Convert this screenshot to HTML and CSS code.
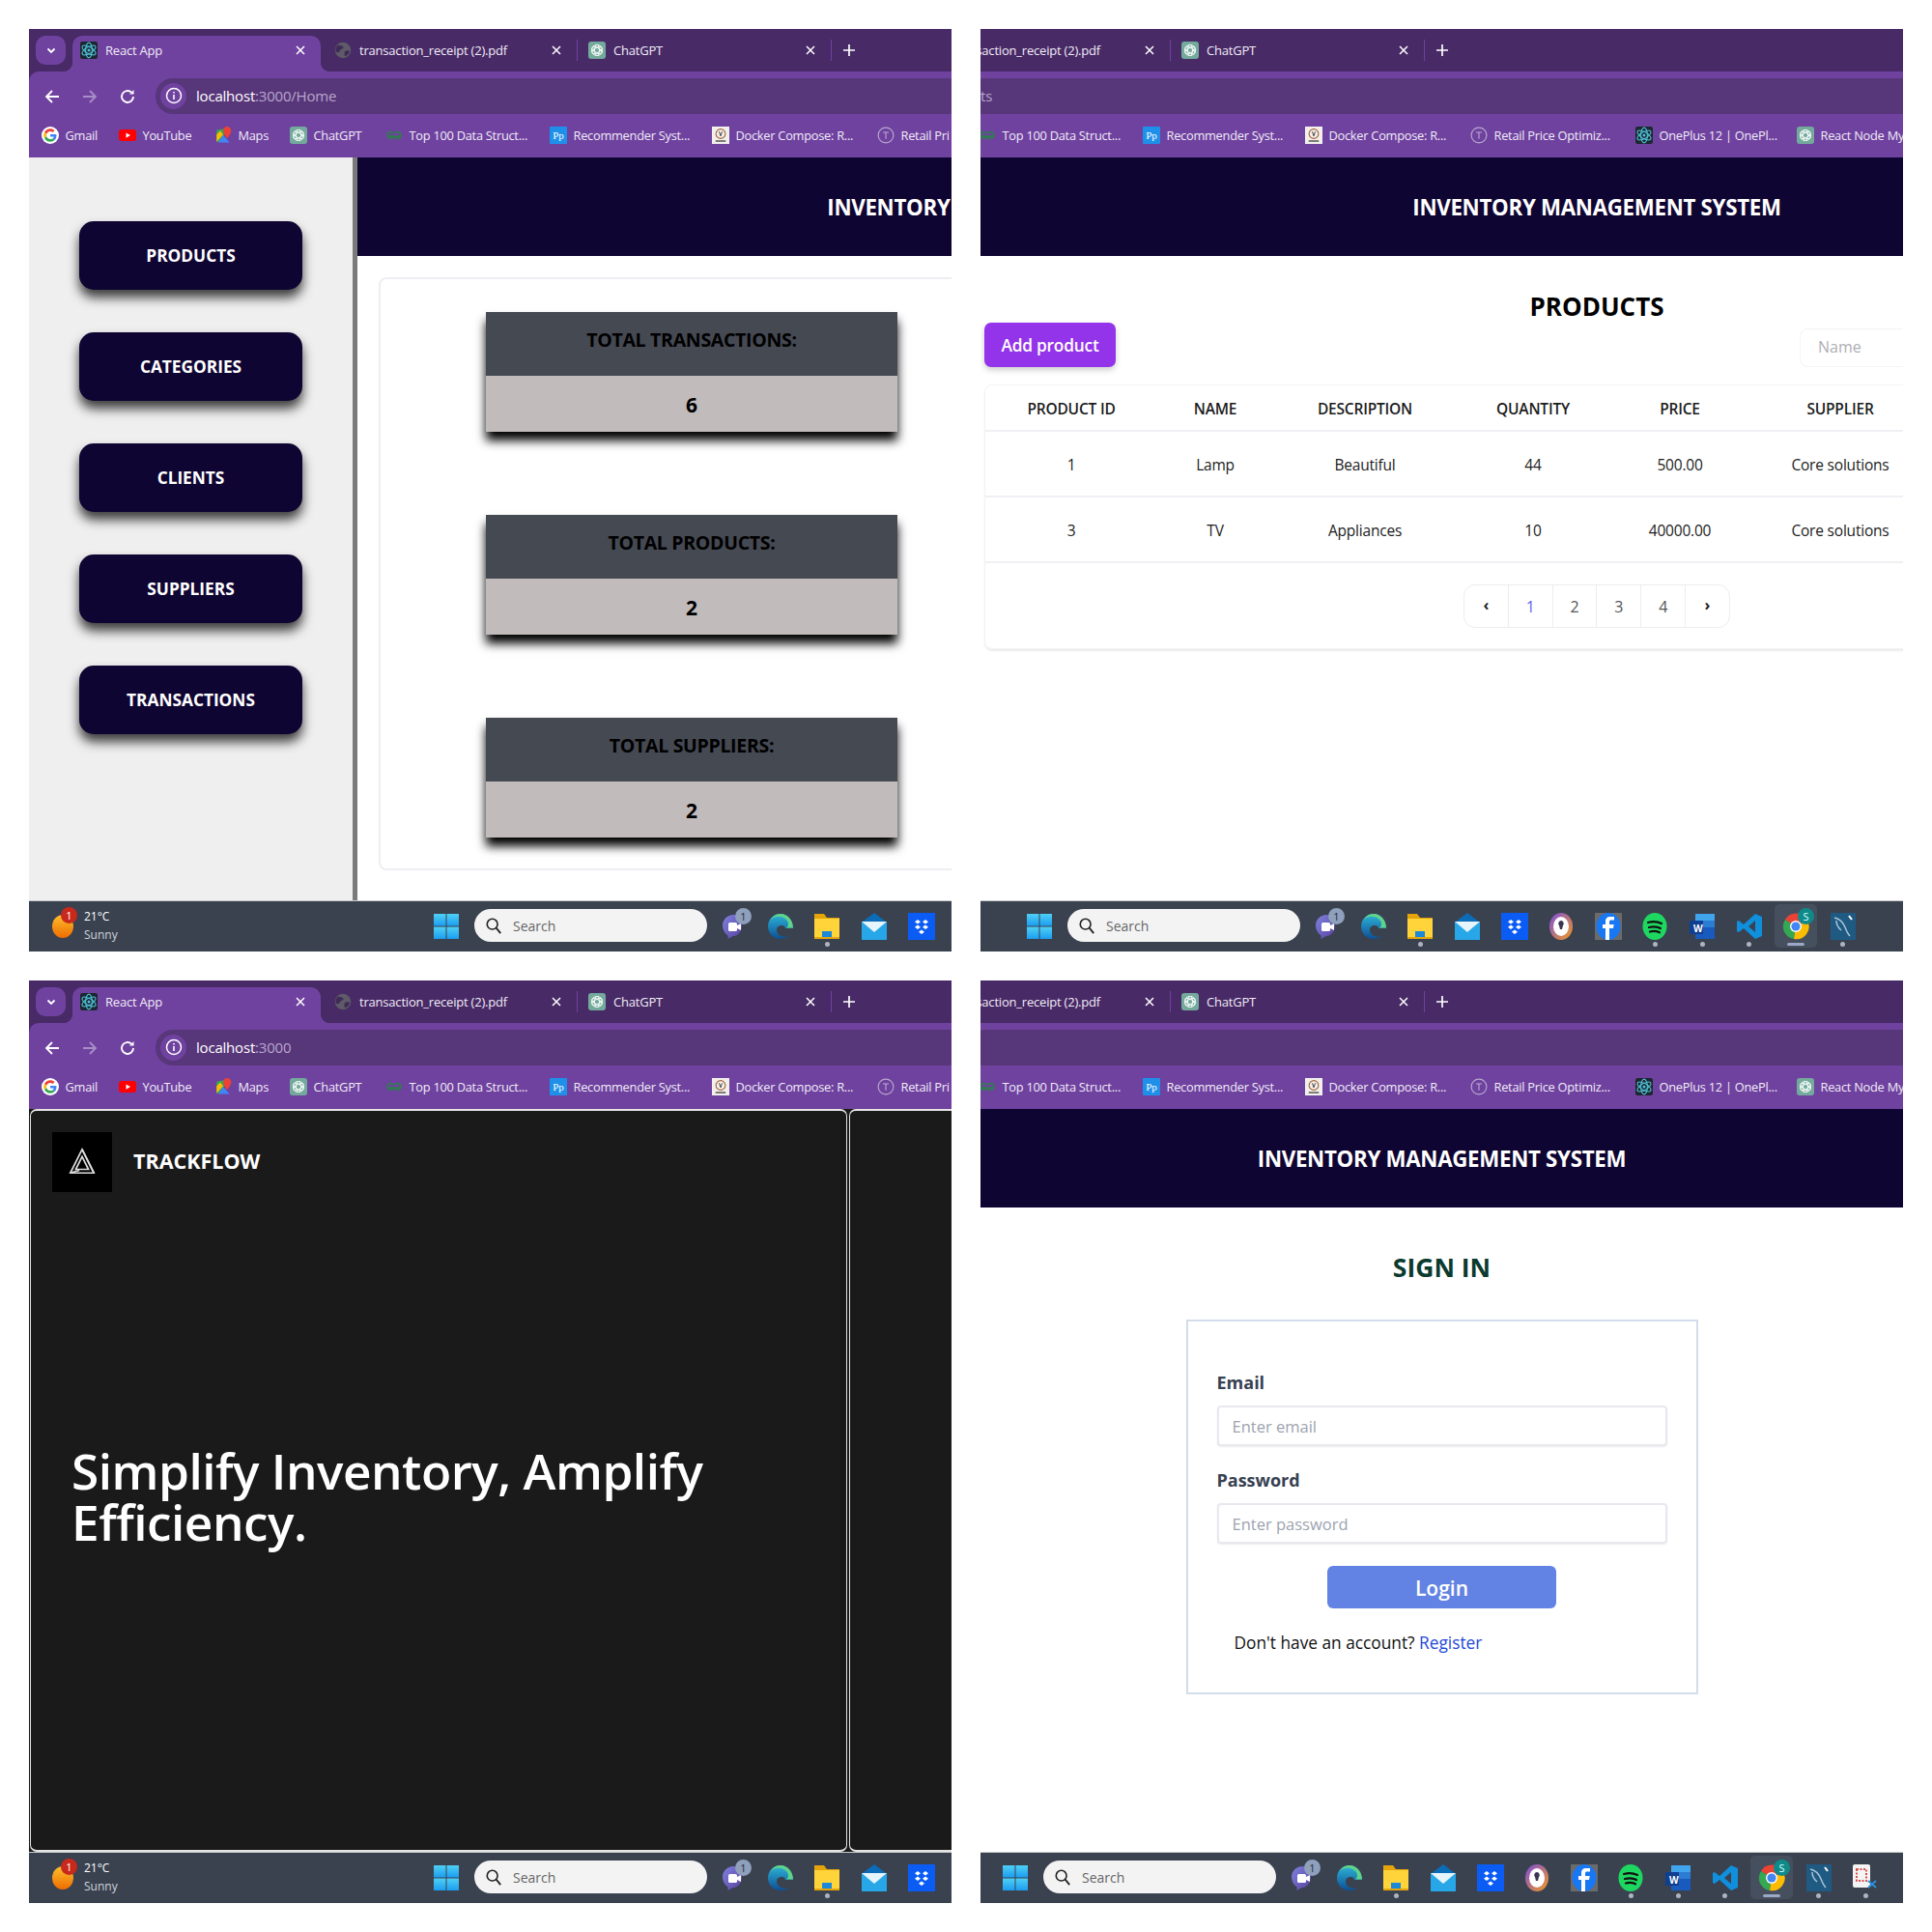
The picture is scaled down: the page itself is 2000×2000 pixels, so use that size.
FILE: index.html
```html
<!DOCTYPE html>
<html>
<head>
<meta charset="utf-8">
<title>Trackflow screens</title>
<link rel="stylesheet" href="styles.css">
</head>
<body>

<svg class="sprites" xmlns="http://www.w3.org/2000/svg">
  <defs>
    <linearGradient id="g-win" x1="0" y1="0" x2="0" y2="1"><stop offset="0" stop-color="#4fd0f5"/><stop offset="1" stop-color="#1b9df0"/></linearGradient>
    <linearGradient id="g-edge" x1="0" y1="0" x2="0" y2="1"><stop offset="0" stop-color="#2fb6d8"/><stop offset="1" stop-color="#0c4f96"/></linearGradient>
    <linearGradient id="g-teams" x1="0" y1="0" x2="1" y2="1"><stop offset="0" stop-color="#7f84e0"/><stop offset="1" stop-color="#5a3f9e"/></linearGradient>
    <linearGradient id="g-vault" x1="0" y1="0" x2="1" y2="1"><stop offset="0" stop-color="#7c4de0"/><stop offset="1" stop-color="#f39a1e"/></linearGradient>
  </defs>
  <symbol id="i-react" viewBox="0 0 24 24"><rect width="24" height="24" rx="3" fill="#1c2730"/><g fill="none" stroke="#4fc3d9" stroke-width="1.4"><ellipse cx="12" cy="12" rx="4.5" ry="10.5"/><ellipse cx="12" cy="12" rx="4.5" ry="10.5" transform="rotate(60 12 12)"/><ellipse cx="12" cy="12" rx="4.5" ry="10.5" transform="rotate(120 12 12)"/></g><circle cx="12" cy="12" r="2" fill="#4fc3d9"/></symbol>
  <symbol id="i-gpt" viewBox="0 0 24 24"><rect width="24" height="24" rx="4" fill="#74aa9c"/><g fill="none" stroke="#eef6f3" stroke-width="1.3"><circle cx="12" cy="12" r="7.5"/><ellipse cx="12" cy="12" rx="3.4" ry="7.5"/><ellipse cx="12" cy="12" rx="3.4" ry="7.5" transform="rotate(60 12 12)"/><ellipse cx="12" cy="12" rx="3.4" ry="7.5" transform="rotate(120 12 12)"/></g></symbol>
  <symbol id="i-globe" viewBox="0 0 24 24"><circle cx="12" cy="12" r="11" fill="#5e5a68"/><path d="M5 5c3 1 5 0 7 2s-1 3-3 4-1 4-4 4-3-2-3-4 1-4 3-6zM15 13c2-1 5-1 6 0s-2 6-5 7-2-6-1-7z" fill="#3f2a58"/></symbol>
  <symbol id="i-google" viewBox="-8 -8 64 64"><circle cx="24" cy="24" r="32" fill="#fff"/><path fill="#EA4335" d="M24 9.5c3.54 0 6.71 1.22 9.21 3.6l6.85-6.85C35.9 2.38 30.47 0 24 0 14.62 0 6.51 5.38 2.56 13.22l7.98 6.19C12.43 13.72 17.74 9.5 24 9.5z"/><path fill="#4285F4" d="M46.98 24.55c0-1.57-.15-3.09-.38-4.55H24v9.02h12.94c-.58 2.96-2.26 5.48-4.78 7.18l7.73 6c4.51-4.18 7.09-10.36 7.09-17.65z"/><path fill="#FBBC05" d="M10.53 28.59c-.48-1.45-.76-2.99-.76-4.59s.27-3.14.76-4.59l-7.98-6.19C.92 16.46 0 20.12 0 24c0 3.88.92 7.54 2.56 10.78l7.97-6.19z"/><path fill="#34A853" d="M24 48c6.48 0 11.93-2.13 15.89-5.81l-7.73-6c-2.15 1.45-4.92 2.3-8.16 2.3-6.26 0-11.57-4.22-13.47-9.91l-7.98 6.19C6.51 42.62 14.62 48 24 48z"/></symbol>
  <symbol id="i-yt" viewBox="0 0 24 24"><rect y="4" width="24" height="16" rx="4" fill="#f00"/><path d="M10 8.5l6 3.500-6 3.500z" fill="#fff"/></symbol>
  <symbol id="i-maps" viewBox="0 0 24 24"><path d="M3 5l10-2v18H3z" fill="#34a853"/><path d="M12 12l9 10H5z" fill="#4285f4"/><path d="M3 21l9-10-4-5-5 5z" fill="#fbbc04"/><path d="M17.500 0a5.500 5.500 0 0 1 5.500 5.500c0 4.500-5.500 10.500-5.500 10.500S12 10 12 5.500A5.500 5.500 0 0 1 17.500 0z" fill="#ea4335"/></symbol>
  <symbol id="i-gfg" viewBox="0 0 24 24"><g fill="none" stroke="#2f7d4f" stroke-width="2.200"><path d="M11 9.500a4.500 4.500 0 1 0 .5 4H3"/><path d="M13 9.500a4.500 4.500 0 1 1-.5 4H21"/></g></symbol>
  <symbol id="i-docker" viewBox="0 0 24 24"><rect width="24" height="24" fill="#f2f0ec"/><circle cx="12" cy="10" r="6.500" fill="none" stroke="#a8643a" stroke-width="1.500"/><path d="M10 7l2 6M14 7l-2 6" stroke="#333" stroke-width="1.200"/><rect x="5" y="19" width="14" height="2" fill="#555"/></symbol>
  <symbol id="i-retail" viewBox="0 0 24 24"><circle cx="12" cy="12" r="10.500" fill="none" stroke="#b9aace" stroke-width="1.500"/><path d="M8 8h8M12 8v9" stroke="#b9aace" stroke-width="1.500" fill="none"/></symbol>
  <symbol id="i-win" viewBox="0 0 26 26"><g fill="url(#g-win)"><rect width="12.500" height="12.500"/><rect x="13.500" width="12.500" height="12.500"/><rect y="13.500" width="12.500" height="12.500"/><rect x="13.500" y="13.500" width="12.500" height="12.500"/></g></symbol>
  <symbol id="i-teams" viewBox="0 0 28 28"><path d="M14 2c6 0 9 5 9 11s-4 11-9 11c-1 0-3 2-6 3 1-2 1-3 0-4-3-2-5-6-5-10C3 7 8 2 14 2z" fill="url(#g-teams)"/><rect x="9" y="10" width="9" height="9" rx="1.500" fill="#fff"/><path d="M18 13l4-2v7l-4-2z" fill="#fff"/></symbol>
  <symbol id="i-edge" viewBox="0 0 28 28"><path d="M14 1C6.500 1 1 7 1 14s5.500 13 13 13c3.500 0 6-1 8-2.500-6 1.500-12-1.500-12-7 0-3 2.500-4.500 5-4.500 3 0 4 1.500 4 3h8C27 8 21.500 1 14 1z" fill="url(#g-edge)"/><path d="M14 1c-4 0-8 2-10 6 3-3 8-4 12-2.500 4 1.500 6 4 6 7 0 2-1 4-3 4h8C27 8 21.500 1 14 1z" fill="#5fd38a"/></symbol>
  <symbol id="i-folder" viewBox="0 0 28 28"><path d="M1 1h10l3 4h13v4H1z" fill="#e5a50a"/><rect x="1" y="6" width="26" height="21" fill="#ffd43b"/><rect x="1" y="25" width="26" height="2" fill="#e5a50a"/><rect x="9" y="19" width="10" height="6" fill="#1b88d8"/></symbol>
  <symbol id="i-mail" viewBox="0 0 28 28"><path d="M14 0l12 9H2z" fill="#0b6cb8"/><rect x="1" y="9" width="26" height="19" fill="#27a6e8"/><path d="M1 9h26l-13 11z" fill="#e6f4fb"/></symbol>
  <symbol id="i-dropbox" viewBox="0 0 28 28"><rect width="28" height="28" fill="#0b5cf5"/><g fill="#fff"><path d="M10 7l3 2.200-3 2.200-3-2.200zM18 7l3 2.200-3 2.200-3-2.200zM10 12.500l3 2.200-3 2.200-3-2.200zM18 12.500l3 2.200-3 2.200-3-2.200zM14 17.500l3 2.200-3 2.200-3-2.200z"/></g></symbol>
  <symbol id="i-vault" viewBox="0 0 28 28"><ellipse cx="14" cy="14" rx="12" ry="14" fill="url(#g-vault)"/><ellipse cx="14" cy="14" rx="8" ry="10" fill="#fff"/><path d="M14 8a3 3 0 0 1 2 5l-1 4h-2l-1-4a3 3 0 0 1 2-5z" fill="#3a3550"/></symbol>
  <symbol id="i-fb" viewBox="0 0 28 28"><rect width="28" height="28" fill="#6b6b6b"/><ellipse cx="14" cy="14" rx="12.500" ry="14" fill="#1877f2"/><path d="M15 28V16h4l.7-4H15V9.500c0-1.400.6-2 2-2h3V4h-4c-3.500 0-5 2-5 5v3H8v4h3v12z" fill="#fff"/></symbol>
  <symbol id="i-spotify" viewBox="0 0 28 28"><ellipse cx="14" cy="14" rx="12.500" ry="14" fill="#1ed760"/><g fill="none" stroke="#111" stroke-width="2.200" stroke-linecap="round"><path d="M7 10c5-1.500 10-1 14 1"/><path d="M8 15c4-1 9-.8 12 1"/><path d="M9 19.500c3-.8 7-.6 10 .8"/></g></symbol>
  <symbol id="i-word" viewBox="0 0 28 28"><rect x="7" y="1" width="20" height="26" fill="#185abd"/><rect x="7" y="1" width="20" height="7" fill="#41a5ee"/><rect x="7" y="8" width="20" height="7" fill="#2b7cd3"/><rect x="1" y="8" width="14" height="14" fill="#103f91"/></symbol>
  <symbol id="i-code" viewBox="0 0 28 28"><path d="M20 1l7 3v20l-7 3-12-11-5 4-2-1V9l2-1 5 4zM20 8l-7 6 7 6z" fill="#0f8fdc"/></symbol>
  <symbol id="i-chrome" viewBox="0 0 28 28"><path d="M14 14L3 7A13 13 0 0 1 26 8z" fill="#ea4335"/><path d="M14 14L3 7a13 13 0 0 0 9 20z" fill="#34a853"/><path d="M14 14l12-6a13 13 0 0 1-14 19z" fill="#fbbc04"/><circle cx="14" cy="14" r="6" fill="#fff"/><circle cx="14" cy="14" r="4.600" fill="#4285f4"/></symbol>
  <symbol id="i-mysql" viewBox="0 0 28 28"><rect x="1" width="26" height="28" fill="#1e5a82"/><path d="M5 5c5 1 9 5 11 10s3 7 5 9M7 8c0 6 3 8 5 10" fill="none" stroke="#a9c4d6" stroke-width="1.500"/><path d="M20 3l3 4" stroke="#fff" stroke-width="2"/></symbol>
  <symbol id="i-snip" viewBox="0 0 28 28"><rect x="1" width="18" height="24" rx="2" fill="#f4f4f4"/><rect x="5" y="5" width="10" height="12" fill="none" stroke="#d9534f" stroke-width="2" stroke-dasharray="2 1.500"/><path d="M17 17l8 7M25 17l-8 7" stroke="#2a8fd8" stroke-width="2"/></symbol>
  <symbol id="i-search" viewBox="0 0 20 20"><circle cx="8.500" cy="8.500" r="6" fill="none" stroke="#222" stroke-width="1.800"/><path d="M13 13l5 6" stroke="#222" stroke-width="2"/></symbol>
  <symbol id="i-close" viewBox="0 0 10 10"><path d="M1 1l8 8M9 1L1 9" stroke="#fff" stroke-width="1.500"/></symbol>
  <symbol id="i-chev" viewBox="0 0 12 12"><path d="M2.500 4.500L6 8l3.500-3.500" fill="none" stroke="#fff" stroke-width="1.800"/></symbol>
  <symbol id="i-plus" viewBox="0 0 14 14"><path d="M7 1v12M1 7h12" stroke="#fff" stroke-width="1.700"/></symbol>
  <symbol id="i-back" viewBox="0 0 18 18"><path d="M16 9H3M9 3L3 9l6 6" fill="none" stroke="currentColor" stroke-width="1.800"/></symbol>
  <symbol id="i-fwd" viewBox="0 0 18 18"><path d="M2 9h13M9 3l6 6-6 6" fill="none" stroke="currentColor" stroke-width="1.800"/></symbol>
  <symbol id="i-reload" viewBox="0 0 18 18"><path d="M15 9a6 6 0 1 1-2-4.500" fill="none" stroke="currentColor" stroke-width="1.900"/><path d="M15.500 2v4.500H11z" fill="currentColor"/></symbol>
  <symbol id="i-info" viewBox="0 0 18 18"><circle cx="9" cy="9" r="7.500" fill="none" stroke="#fff" stroke-width="1.500"/><path d="M9 8v5M9 5v1.600" stroke="#fff" stroke-width="1.600"/></symbol>
  <symbol id="i-logo" viewBox="0 0 32 32"><g fill="none" stroke="#ddd" stroke-width="1.800"><path d="M16 2L3 28h26z"/><path d="M16 10L9 24h14z"/><path d="M3 28l10-3M29 28L16 2"/></g></symbol>
</svg>

<div class="sheet">

  <!-- dashboard -->
  <section class="window">
    <div class="tabstrip">
      <div class="tab-row">
        <span class="tab-list"><svg class="ico-s"><use href="#i-chev"/></svg></span>
        <div class="tab active"><svg class="fav"><use href="#i-react"/></svg><span class="tab-title">React App</span><svg class="tab-x"><use href="#i-close"/></svg></div>
        <div class="tab"><svg class="fav"><use href="#i-globe"/></svg><span class="tab-title">transaction_receipt (2).pdf</span><svg class="tab-x"><use href="#i-close"/></svg></div>
        <div class="tab last"><svg class="fav"><use href="#i-gpt"/></svg><span class="tab-title">ChatGPT</span><svg class="tab-x"><use href="#i-close"/></svg></div>
        <svg class="tab-plus"><use href="#i-plus"/></svg>
      </div>
    </div>
    <div class="toolbar">
      <svg class="nav"><use href="#i-back"/></svg>
      <svg class="nav off"><use href="#i-fwd"/></svg>
      <svg class="nav"><use href="#i-reload"/></svg>
      <div class="address"><span class="site-info"><svg class="ico-i"><use href="#i-info"/></svg></span><span class="url">localhost<span class="url-rest">:3000/Home</span></span></div>
    </div>
    <div class="bookmarks">
      <div class="marks">
        <span class="mark"><svg class="fav"><use href="#i-google"/></svg>Gmail</span>
        <span class="mark"><svg class="fav"><use href="#i-yt"/></svg>YouTube</span>
        <span class="mark"><svg class="fav"><use href="#i-maps"/></svg>Maps</span>
        <span class="mark"><svg class="fav"><use href="#i-gpt"/></svg>ChatGPT</span>
        <span class="mark"><svg class="fav"><use href="#i-gfg"/></svg>Top 100 Data Struct...</span>
        <span class="mark"><span class="pp">Pp</span>Recommender Syst...</span>
        <span class="mark"><svg class="fav"><use href="#i-docker"/></svg>Docker Compose: R...</span>
        <span class="mark"><svg class="fav"><use href="#i-retail"/></svg>Retail Pri</span>
      </div>
    </div>
    <main class="viewport">
      <aside class="sidebar">
        <a class="side-btn">PRODUCTS</a>
        <a class="side-btn">CATEGORIES</a>
        <a class="side-btn">CLIENTS</a>
        <a class="side-btn">SUPPLIERS</a>
        <a class="side-btn">TRANSACTIONS</a>
      </aside>
      <div class="dash">
        <header class="app-head">INVENTORY MANAGEMENT SYSTEM</header>
        <div class="stat-box">
          <div class="stat"><div class="stat-name">TOTAL TRANSACTIONS:</div><div class="stat-num">6</div></div>
          <div class="stat"><div class="stat-name">TOTAL PRODUCTS:</div><div class="stat-num">2</div></div>
          <div class="stat"><div class="stat-name">TOTAL SUPPLIERS:</div><div class="stat-num">2</div></div>
        </div>
      </div>
    </main>
    <footer class="taskbar">
      <div class="weather"><span class="sun"><span class="sun-badge">1</span></span><span class="weather-text"><span>21°C</span><span class="weather-sub">Sunny</span></span></div>
      <svg class="start"><use href="#i-win"/></svg>
      <div class="search"><svg class="search-ico"><use href="#i-search"/></svg>Search</div>
      <span class="cell"><svg class="app"><use href="#i-teams"/></svg><span class="count">1</span></span>
      <span class="cell"><svg class="app"><use href="#i-edge"/></svg></span>
      <span class="cell on"><svg class="app"><use href="#i-folder"/></svg></span>
      <span class="cell"><svg class="app"><use href="#i-mail"/></svg></span>
      <span class="cell"><svg class="app"><use href="#i-dropbox"/></svg></span>
    </footer>
  </section>

  <!-- products -->
  <section class="window shifted">
    <div class="tabstrip">
      <div class="tab-row">
        <div class="tab"><svg class="fav"><use href="#i-globe"/></svg><span class="tab-title">transaction_receipt (2).pdf</span><svg class="tab-x"><use href="#i-close"/></svg></div>
        <div class="tab last"><svg class="fav"><use href="#i-gpt"/></svg><span class="tab-title">ChatGPT</span><svg class="tab-x"><use href="#i-close"/></svg></div>
        <svg class="tab-plus"><use href="#i-plus"/></svg>
      </div>
    </div>
    <div class="toolbar">
      <div class="address flush"><span class="url-rest">ts</span></div>
    </div>
    <div class="bookmarks">
      <div class="marks">
        <span class="mark"><svg class="fav"><use href="#i-gfg"/></svg>Top 100 Data Struct...</span>
        <span class="mark"><span class="pp">Pp</span>Recommender Syst...</span>
        <span class="mark"><svg class="fav"><use href="#i-docker"/></svg>Docker Compose: R...</span>
        <span class="mark"><svg class="fav"><use href="#i-retail"/></svg>Retail Price Optimiz...</span>
        <span class="mark"><svg class="fav"><use href="#i-react"/></svg>OnePlus 12 | OnePl...</span>
        <span class="mark"><svg class="fav"><use href="#i-gpt"/></svg>React Node My</span>
      </div>
    </div>
    <main class="viewport">
      <div class="products">
        <header class="app-head">INVENTORY MANAGEMENT SYSTEM</header>
        <h2 class="page-title">PRODUCTS</h2>
        <div class="actions">
          <button class="add-btn">Add product</button>
          <div class="name-filter">Name</div>
        </div>
        <div class="table-card">
          <table class="grid">
            <colgroup><col class="c-id"><col class="c-name"><col class="c-desc"><col class="c-qty"><col class="c-price"><col class="c-sup"><col></colgroup>
            <thead><tr><th>PRODUCT ID</th><th>NAME</th><th>DESCRIPTION</th><th>QUANTITY</th><th>PRICE</th><th>SUPPLIER</th><th></th></tr></thead>
            <tbody>
              <tr><td>1</td><td>Lamp</td><td>Beautiful</td><td>44</td><td>500.00</td><td>Core solutions</td><td></td></tr>
              <tr><td>3</td><td>TV</td><td>Appliances</td><td>10</td><td>40000.00</td><td>Core solutions</td><td></td></tr>
            </tbody>
          </table>
          <div class="pager"><span class="pg arrow">‹</span><span class="pg cur">1</span><span class="pg">2</span><span class="pg">3</span><span class="pg">4</span><span class="pg arrow">›</span></div>
        </div>
      </div>
    </main>
    <footer class="taskbar tb-a">
      <svg class="start"><use href="#i-win"/></svg>
      <div class="search"><svg class="search-ico"><use href="#i-search"/></svg>Search</div>
      <span class="cell"><svg class="app"><use href="#i-teams"/></svg><span class="count">1</span></span>
      <span class="cell"><svg class="app"><use href="#i-edge"/></svg></span>
      <span class="cell on"><svg class="app"><use href="#i-folder"/></svg></span>
      <span class="cell"><svg class="app"><use href="#i-mail"/></svg></span>
      <span class="cell"><svg class="app"><use href="#i-dropbox"/></svg></span>
      <span class="cell"><svg class="app"><use href="#i-vault"/></svg></span>
      <span class="cell"><svg class="app"><use href="#i-fb"/></svg></span>
      <span class="cell on"><svg class="app"><use href="#i-spotify"/></svg></span>
      <span class="cell on"><svg class="app"><use href="#i-word"/></svg><span class="word-w">W</span></span>
      <span class="cell on"><svg class="app"><use href="#i-code"/></svg></span>
      <span class="cell cell-active"><svg class="app"><use href="#i-chrome"/></svg><span class="count teal">S</span></span>
      <span class="cell on"><svg class="app"><use href="#i-mysql"/></svg></span>
    </footer>
  </section>

  <!-- landing -->
  <section class="window">
    <div class="tabstrip">
      <div class="tab-row">
        <span class="tab-list"><svg class="ico-s"><use href="#i-chev"/></svg></span>
        <div class="tab active"><svg class="fav"><use href="#i-react"/></svg><span class="tab-title">React App</span><svg class="tab-x"><use href="#i-close"/></svg></div>
        <div class="tab"><svg class="fav"><use href="#i-globe"/></svg><span class="tab-title">transaction_receipt (2).pdf</span><svg class="tab-x"><use href="#i-close"/></svg></div>
        <div class="tab last"><svg class="fav"><use href="#i-gpt"/></svg><span class="tab-title">ChatGPT</span><svg class="tab-x"><use href="#i-close"/></svg></div>
        <svg class="tab-plus"><use href="#i-plus"/></svg>
      </div>
    </div>
    <div class="toolbar">
      <svg class="nav"><use href="#i-back"/></svg>
      <svg class="nav off"><use href="#i-fwd"/></svg>
      <svg class="nav"><use href="#i-reload"/></svg>
      <div class="address"><span class="site-info"><svg class="ico-i"><use href="#i-info"/></svg></span><span class="url">localhost<span class="url-rest">:3000</span></span></div>
    </div>
    <div class="bookmarks">
      <div class="marks">
        <span class="mark"><svg class="fav"><use href="#i-google"/></svg>Gmail</span>
        <span class="mark"><svg class="fav"><use href="#i-yt"/></svg>YouTube</span>
        <span class="mark"><svg class="fav"><use href="#i-maps"/></svg>Maps</span>
        <span class="mark"><svg class="fav"><use href="#i-gpt"/></svg>ChatGPT</span>
        <span class="mark"><svg class="fav"><use href="#i-gfg"/></svg>Top 100 Data Struct...</span>
        <span class="mark"><span class="pp">Pp</span>Recommender Syst...</span>
        <span class="mark"><svg class="fav"><use href="#i-docker"/></svg>Docker Compose: R...</span>
        <span class="mark"><svg class="fav"><use href="#i-retail"/></svg>Retail Pri</span>
      </div>
    </div>
    <main class="viewport landing">
      <div class="hero">
        <div class="brand"><span class="brand-mark"><svg class="brand-ico"><use href="#i-logo"/></svg></span><span class="brand-name">TRACKFLOW</span></div>
        <h1 class="headline">Simplify Inventory, Amplify Efficiency.</h1>
      </div>
      <div class="hero-side"></div>
    </main>
    <footer class="taskbar">
      <div class="weather"><span class="sun"><span class="sun-badge">1</span></span><span class="weather-text"><span>21°C</span><span class="weather-sub">Sunny</span></span></div>
      <svg class="start"><use href="#i-win"/></svg>
      <div class="search"><svg class="search-ico"><use href="#i-search"/></svg>Search</div>
      <span class="cell"><svg class="app"><use href="#i-teams"/></svg><span class="count">1</span></span>
      <span class="cell"><svg class="app"><use href="#i-edge"/></svg></span>
      <span class="cell on"><svg class="app"><use href="#i-folder"/></svg></span>
      <span class="cell"><svg class="app"><use href="#i-mail"/></svg></span>
      <span class="cell"><svg class="app"><use href="#i-dropbox"/></svg></span>
    </footer>
  </section>

  <!-- sign in -->
  <section class="window shifted">
    <div class="tabstrip">
      <div class="tab-row">
        <div class="tab"><svg class="fav"><use href="#i-globe"/></svg><span class="tab-title">transaction_receipt (2).pdf</span><svg class="tab-x"><use href="#i-close"/></svg></div>
        <div class="tab last"><svg class="fav"><use href="#i-gpt"/></svg><span class="tab-title">ChatGPT</span><svg class="tab-x"><use href="#i-close"/></svg></div>
        <svg class="tab-plus"><use href="#i-plus"/></svg>
      </div>
    </div>
    <div class="toolbar">
      <div class="address flush"></div>
    </div>
    <div class="bookmarks">
      <div class="marks">
        <span class="mark"><svg class="fav"><use href="#i-gfg"/></svg>Top 100 Data Struct...</span>
        <span class="mark"><span class="pp">Pp</span>Recommender Syst...</span>
        <span class="mark"><svg class="fav"><use href="#i-docker"/></svg>Docker Compose: R...</span>
        <span class="mark"><svg class="fav"><use href="#i-retail"/></svg>Retail Price Optimiz...</span>
        <span class="mark"><svg class="fav"><use href="#i-react"/></svg>OnePlus 12 | OnePl...</span>
        <span class="mark"><svg class="fav"><use href="#i-gpt"/></svg>React Node My</span>
      </div>
    </div>
    <main class="viewport">
      <div class="login">
        <header class="app-head">INVENTORY MANAGEMENT SYSTEM</header>
        <h2 class="login-title">SIGN IN</h2>
        <form class="login-box">
          <label class="field-label">Email</label>
          <input class="field" type="text" placeholder="Enter email">
          <label class="field-label second">Password</label>
          <input class="field" type="text" placeholder="Enter password">
          <button class="login-btn" type="button">Login</button>
          <p class="register">Don't have an account? <a class="register-link">Register</a></p>
        </form>
      </div>
    </main>
    <footer class="taskbar tb-b">
      <svg class="start"><use href="#i-win"/></svg>
      <div class="search"><svg class="search-ico"><use href="#i-search"/></svg>Search</div>
      <span class="cell"><svg class="app"><use href="#i-teams"/></svg><span class="count">1</span></span>
      <span class="cell"><svg class="app"><use href="#i-edge"/></svg></span>
      <span class="cell on"><svg class="app"><use href="#i-folder"/></svg></span>
      <span class="cell"><svg class="app"><use href="#i-mail"/></svg></span>
      <span class="cell"><svg class="app"><use href="#i-dropbox"/></svg></span>
      <span class="cell"><svg class="app"><use href="#i-vault"/></svg></span>
      <span class="cell"><svg class="app"><use href="#i-fb"/></svg></span>
      <span class="cell on"><svg class="app"><use href="#i-spotify"/></svg></span>
      <span class="cell on"><svg class="app"><use href="#i-word"/></svg><span class="word-w">W</span></span>
      <span class="cell on"><svg class="app"><use href="#i-code"/></svg></span>
      <span class="cell cell-active"><svg class="app"><use href="#i-chrome"/></svg><span class="count teal">S</span></span>
      <span class="cell on"><svg class="app"><use href="#i-mysql"/></svg></span>
      <span class="cell on"><svg class="app"><use href="#i-snip"/></svg></span>
    </footer>
  </section>

</div>
</body>
</html>
```

FILE: styles.css
```css
* {
   box-sizing: border-box;
}

body {
   margin: 0;
   background-color: white;
   font-family: "Open Sans", "Noto Sans", sans-serif;
}

.sprites {
   position: absolute;
   width: 0;
   height: 0;
}

.sheet {
   display: grid;
   grid-template-columns: 955px 955px;
   grid-template-rows: 955px 955px;
   gap: 30px;
   padding: 30px;
}

.window {
   display: flex;
   flex-direction: column;
   overflow: hidden;
   background-color: #482a66;
}

/* browser chrome */

.tabstrip {
   flex: none;
   height: 44px;
   overflow: hidden;
}

.tab-row {
   display: flex;
   align-items: flex-start;
   width: 1300px;
   padding: 7px 0 0 7px;
}

/* the right hand shots start part way along the strip */
.shifted .tab-row {
   margin-left: -63px;
   padding-left: 0;
}

.tab-list {
   display: flex;
   align-items: center;
   justify-content: center;
   width: 31px;
   height: 30px;
   margin-right: 7px;
   border-radius: 10px;
   background-color: #6f42a0;
}

.ico-s {
   width: 12px;
   height: 12px;
}

.tab {
   display: flex;
   align-items: center;
   gap: 8px;
   width: 259px;
   height: 30px;
   padding: 0 16px 0 8px;
   margin-right: 4px;
   font-size: 13px;
   letter-spacing: -0.2px;
   color: #f1ecf6;
   position: relative;
}

.tab::after {
   content: "";
   position: absolute;
   right: -1px;
   top: 4px;
   width: 1px;
   height: 22px;
   background-color: #6f42a0;
}

.tab.active {
   width: 257px;
   height: 37px;
   margin-right: 6px;
   padding-bottom: 7px;
   border-radius: 10px 10px 0 0;
   background-color: #6f42a0;
}

.tab.active::before, .tab.active::after {
   content: "";
   position: absolute;
   top: auto;
   bottom: 0;
   width: 10px;
   height: 10px;
}

.tab.active::before {
   right: -10px;
   background: radial-gradient(circle at 100% 0, transparent 10px, #6f42a0 10.5px);
}

.tab.active::after {
   right: auto;
   left: -10px;
   background: radial-gradient(circle at 0 0, transparent 10px, #6f42a0 10.5px);
}

.tab.last {
   margin-right: 0;
}

.tab-title {
   flex: 1;
   white-space: nowrap;
}

.fav {
   flex: none;
   width: 18px;
   height: 18px;
}

.pp {
   flex: none;
   width: 18px;
   height: 18px;
   border-radius: 1px;
   background-color: #1e90ea;
   color: white;
   font-family: "Liberation Serif", serif;
   font-size: 11px;
   line-height: 18px;
   letter-spacing: 0;
   text-align: center;
}

.tab-x {
   flex: none;
   width: 10px;
   height: 10px;
}

.tab-plus {
   flex: none;
   width: 14px;
   height: 14px;
   margin: 8px 0 0 12px;
}

.toolbar {
   flex: none;
   display: flex;
   align-items: center;
   height: 44px;
   padding-top: 7px;
   overflow: hidden;
   background-color: #6f42a0;
   border-top-left-radius: 10px;
}

.shifted .toolbar {
   border-top-left-radius: 0;
}

.nav {
   flex: none;
   width: 18px;
   height: 18px;
   margin-left: 15px;
   margin-right: 6px;
   color: #fff;
}

.nav.off {
   color: #a78fc6;
}

.address {
   flex: 1;
   display: flex;
   align-items: center;
   gap: 10px;
   height: 37px;
   margin-left: 14px;
   padding-left: 5px;
   padding-bottom: 1px;
   border-radius: 18px 0 0 18px;
   background-color: #58367a;
   font-size: 15px;
   letter-spacing: -0.2px;
   color: #fff;
}

.address.flush {
   margin-left: 0;
   padding-left: 0;
   border-radius: 0;
}

.site-info {
   display: flex;
   align-items: center;
   justify-content: center;
   width: 27px;
   height: 27px;
   border-radius: 50%;
   background-color: #6f42a0;
}

.ico-i {
   width: 18px;
   height: 18px;
}

.url-rest {
   color: #b7a6cd;
}

.bookmarks {
   flex: none;
   height: 45px;
   overflow: hidden;
   background-color: #6f42a0;
}

.marks {
   display: grid;
   grid-template-columns: 80px 99px 78px 99px 170px 168px 171px 100px;
   height: 100%;
   padding-left: 13px;
   padding-bottom: 1px;
   align-items: center;
}

.shifted .marks {
   grid-template-columns: 170px 168px 171px 171px 167px 100px;
   width: 960px;
   margin-left: -2px;
   padding-left: 0;
}

.mark {
   display: flex;
   align-items: center;
   gap: 6.5px;
   font-size: 12.8px;
   letter-spacing: -0.25px;
   color: #f1ecf6;
   white-space: nowrap;
}

.viewport {
   flex: 1;
   display: flex;
   min-height: 0;
   overflow: hidden;
   background-color: white;
}

/* header shared by the app pages */

.app-head {
   height: 102px;
   padding-top: 1px;
   display: flex;
   align-items: center;
   justify-content: center;
   background-color: #0f0532;
   color: white;
   font-size: 22.3px;
   font-weight: 700;
   letter-spacing: -0.3px;
}

/* dashboard */

.sidebar {
   flex: none;
   display: flex;
   flex-direction: column;
   gap: 44px;
   width: 340px;
   padding: 66px 0 0 52px;
   background-color: #efefef;
   border-right: 5px solid #7a7a7a;
}

.side-btn {
   display: flex;
   align-items: center;
   justify-content: center;
   width: 231px;
   height: 71px;
   border-radius: 15px;
   background-color: #0f0532;
   color: white;
   font-size: 17.3px;
   font-weight: 700;
   box-shadow: 0 8px 12px rgba(0, 0, 0, 0.75);
}

.dash {
   flex: none;
   width: 1354px;
}

.stat-box {
   display: flex;
   flex-direction: column;
   gap: 86px;
   height: 614px;
   margin: 22px 0 0 22px;
   padding: 34px 0 0 109px;
   border: 2px solid #eeeef3;
   border-radius: 8px;
}

.stat {
   width: 426px;
   box-shadow: 0 9px 10px #000;
}

.stat-name {
   height: 66px;
   padding-top: 15px;
   background-color: #454952;
   color: black;
   font-size: 19.5px;
   line-height: 28px;
   font-weight: 700;
   letter-spacing: -0.3px;
   text-align: center;
}

.stat-num {
   height: 58px;
   padding-top: 15px;
   background-color: #c1bbbb;
   color: black;
   font-size: 21px;
   line-height: 30px;
   font-weight: 700;
   text-align: center;
}

/* products */

.products {
   flex: none;
   width: 1276px;
}

.page-title {
   height: 36px;
   margin: 34px 0 0;
   text-align: center;
   font-size: 26px;
   line-height: 36px;
   font-weight: 700;
   color: black;
}

.actions {
   display: flex;
   align-items: flex-end;
   gap: 708px;
   margin-top: -1px;
   padding-left: 4px;
}

.add-btn {
   width: 136px;
   height: 46px;
   padding: 0;
   border: none;
   border-radius: 7px;
   background-color: #9333ea;
   color: white;
   font-family: inherit;
   font-size: 17.3px;
   font-weight: 600;
   letter-spacing: -0.2px;
   box-shadow: 0 3px 6px rgba(0, 0, 0, 0.2);
}

.name-filter {
   width: 300px;
   height: 40px;
   padding-left: 18px;
   border: 1px solid #f3f3f5;
   border-radius: 8px;
   font-size: 16px;
   line-height: 36px;
   color: #aeaeb4;
}

.table-card {
   width: 1268px;
   height: 274px;
   margin: 18px 0 0 4px;
   border: 1px solid #f3f3f6;
   border-radius: 8px;
   box-shadow: 0 2px 2px rgba(0, 0, 0, 0.08);
}

.grid {
   width: 100%;
   table-layout: fixed;
   border-collapse: collapse;
   font-size: 15.5px;
   color: #1c1c1c;
}

.c-id { width: 178px; }
.c-name { width: 120px; }
.c-desc { width: 190px; }
.c-qty { width: 158px; }
.c-price { width: 146px; }
.c-sup { width: 186px; }

.grid th {
   height: 47px;
   padding-top: 2px;
   font-weight: 600;
   border-bottom: 2px solid #f0f0f4;
   letter-spacing: -0.2px;
}

.grid td {
   height: 68px;
   padding-top: 3px;
   text-align: center;
   border-bottom: 2px solid #f0f0f4;
   letter-spacing: -0.2px;
}

.pager {
   display: flex;
   width: 276px;
   height: 45px;
   margin: 22px auto 0;
   border: 1px solid #ecedf1;
   border-radius: 12px;
}

.pg {
   flex: 1;
   display: flex;
   align-items: center;
   justify-content: center;
   border-left: 1px solid #ecedf1;
   font-size: 16px;
   color: #555;
}

.pg:first-child {
   border-left: none;
}

.pg.cur {
   color: #6366f1;
}

.pg.arrow {
   padding-bottom: 3px;
   font-weight: 700;
   color: #222;
}

/* landing */

.landing {
   background-color: #1a1a1a;
   gap: 2px;
   padding-left: 1px;
}

.hero, .hero-side {
   height: 769px;
   background-color: #1a1a1a;
   border: 2px solid #e4e4e4;
   border-left-width: 1px;
   border-right-width: 1px;
   border-radius: 7px;
}

.hero {
   flex: none;
   width: 846px;
   padding: 22px 0 0 22px;
}

.hero-side {
   flex: 1;
   border-right: none;
   border-radius: 7px 0 0 7px;
}

.brand {
   display: flex;
   align-items: center;
   gap: 22px;
}

.brand-mark {
   display: flex;
   align-items: center;
   justify-content: center;
   width: 62px;
   height: 62px;
   background-color: black;
}

.brand-ico {
   width: 30px;
   height: 30px;
}

.brand-name {
   margin-top: -3px;
   color: white;
   font-size: 21.5px;
   font-weight: 700;
}

.headline {
   width: 720px;
   margin: 262px 0 0 20px;
   color: white;
   font-size: 51.3px;
   line-height: 53px;
   font-weight: 600;
   letter-spacing: -0.5px;
}

/* sign in */

.login {
   flex: 1;
}

.login-title {
   height: 36px;
   margin: 44px 0 0;
   text-align: center;
   font-size: 26.5px;
   line-height: 36px;
   font-weight: 700;
   color: #0b3b2e;
}

.login-box {
   display: flex;
   flex-direction: column;
   width: 530px;
   height: 388px;
   margin: 36px auto 0;
   padding: 49px 30px 0;
   border: 2px solid #d3dcea;
}

.field-label {
   height: 28px;
   font-size: 18px;
   line-height: 28px;
   font-weight: 700;
   color: #374151;
}

.field-label.second {
   margin-top: 21px;
}

.field {
   flex: none;
   width: 466px;
   height: 42px;
   margin-top: 10px;
   padding: 0 14px;
   border: 2px solid #e8e8ee;
   border-radius: 4px;
   box-shadow: 0 1px 2px rgba(0, 0, 0, 0.08);
   font-family: inherit;
   font-size: 16.5px;
}

.field::placeholder {
   color: #9ca3af;
}

.login-btn {
   flex: none;
   align-self: center;
   width: 237px;
   height: 44px;
   margin-top: 23px;
   padding-top: 3px;
   border: none;
   border-radius: 6px;
   background-color: #6283e3;
   color: white;
   font-family: inherit;
   font-size: 21px;
   font-weight: 600;
}

.register {
   margin: 24px 0 0 18px;
   font-size: 17.3px;
   line-height: 24px;
   color: #111;
}

.register-link {
   color: #2348d8;
}

/* taskbar */

.taskbar {
   flex: none;
   display: flex;
   align-items: flex-start;
   height: 53px;
   overflow: hidden;
   border-top: 1px solid #c9cacd;
   background-color: #3a4250;
}

.tb-a {
   padding-left: 48px;
}

.tb-b {
   padding-left: 23px;
}

.weather {
   flex: none;
   display: flex;
   width: 419px;
   padding: 7px 0 0 24px;
}

.sun {
   flex: none;
   width: 22px;
   height: 24px;
   margin-top: 7px;
   border-radius: 50%;
   background: linear-gradient(#fbc02d, #ef6c00);
   position: relative;
}

.sun-badge {
   position: absolute;
   left: 9px;
   top: -8px;
   width: 17px;
   height: 17px;
   border-radius: 50%;
   background-color: #c9281c;
   color: white;
   font-size: 11px;
   line-height: 17px;
   text-align: center;
}

.weather-text {
   display: flex;
   flex-direction: column;
   gap: 1px;
   margin-left: 11px;
   font-size: 12px;
   line-height: 18px;
   color: white;
}

.weather-sub {
   color: #cfd3da;
}

.start {
   flex: none;
   width: 26px;
   height: 26px;
   margin-top: 13px;
}

.search {
   flex: none;
   display: flex;
   align-items: center;
   gap: 11px;
   width: 241px;
   height: 34px;
   margin: 8px 3px 0 16px;
   padding-left: 11px;
   border-radius: 17px;
   background-color: #f3f3f3;
   font-size: 14px;
   color: #666;
}

.search-ico {
   width: 18px;
   height: 18px;
}

.cell {
   flex: none;
   display: flex;
   flex-direction: column;
   align-items: center;
   width: 48.6px;
   height: 52px;
   padding-top: 12px;
   position: relative;
}

.app {
   flex: none;
   width: 28px;
   height: 28px;
}

.cell.on::after, .cell-active::after {
   content: "";
   width: 5px;
   height: 5px;
   margin-top: 2px;
   border-radius: 50%;
   background-color: #aeb4be;
}

.cell-active::before {
   content: "";
   position: absolute;
   left: 2px;
   top: 3px;
   width: 44px;
   height: 45px;
   border-radius: 5px;
   background-color: #464f5d;
}

.cell-active .app {
   position: relative;
}

.cell-active::after {
   width: 18px;
   height: 3px;
   margin-top: 3px;
   border-radius: 2px;
   background-color: #9aa9c6;
   position: relative;
}

.count {
   position: absolute;
   left: 26px;
   top: 7px;
   width: 17px;
   height: 17px;
   border-radius: 50%;
   background-color: #8ea0bc;
   color: #23293a;
   font-size: 11px;
   line-height: 17px;
   text-align: center;
}

.count.teal {
   background-color: #0f8a8a;
   color: #dff;
}

.word-w {
   position: absolute;
   left: 13px;
   top: 22px;
   width: 14px;
   color: white;
   font-size: 10px;
   line-height: 12px;
   font-weight: 700;
   text-align: center;
}
```
